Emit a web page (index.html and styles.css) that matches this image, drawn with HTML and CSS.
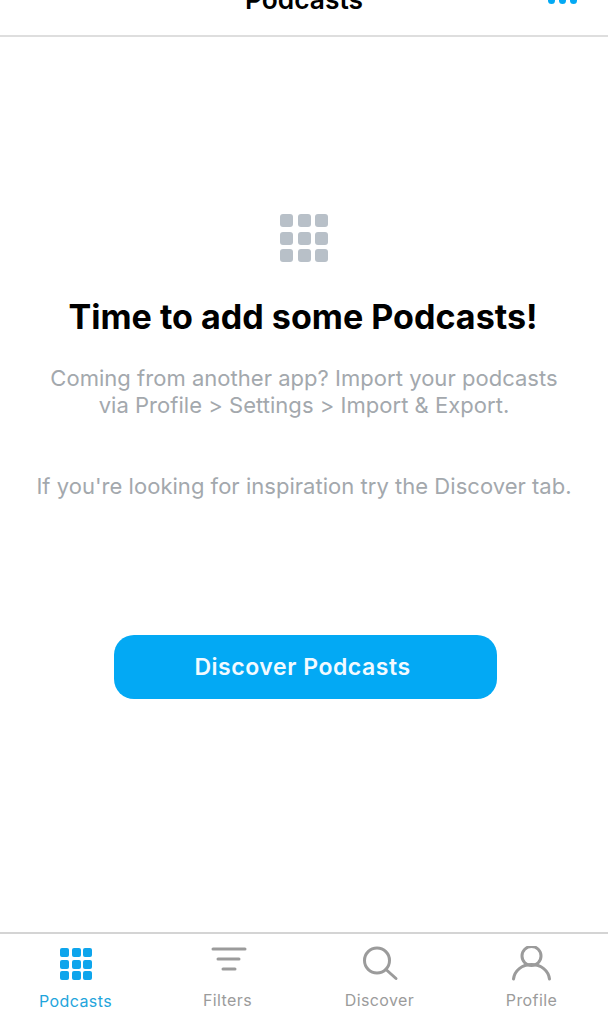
FILE: index.html
```html
<!DOCTYPE html>
<html lang="en">
<head>
  <meta charset="UTF-8">
  <meta name="viewport" content="width=device-width, initial-scale=1">
  <title>Podcasts</title>
  <link rel="stylesheet" href="styles.css">
</head>
<body>
  <div class="app">
    <div class="topbar">
      <h1 class="topbar-title">Podcasts</h1>
      <div class="more-dots"><span></span><span></span><span></span></div>
    </div>

    <div class="empty">
      <div class="grid-icon">
        <span></span><span></span><span></span>
        <span></span><span></span><span></span>
        <span></span><span></span><span></span>
      </div>
      <h2 class="empty-title">Time to add some Podcasts!</h2>
      <p class="empty-text">Coming from another app? Import your podcasts<br>via Profile &gt; Settings &gt; Import &amp; Export.</p>
      <p class="empty-text empty-hint">If you're looking for inspiration try the Discover tab.</p>
      <button class="discover-btn">Discover Podcasts</button>
    </div>

    <div class="tabbar">
      <a class="tab active">
        <div class="grid-icon small">
          <span></span><span></span><span></span>
          <span></span><span></span><span></span>
          <span></span><span></span><span></span>
        </div>
        <span class="tab-label">Podcasts</span>
      </a>
      <a class="tab">
        <svg class="tab-icon" viewBox="0 0 40 36" fill="none" stroke="#9b9b9b" stroke-width="3" stroke-linecap="round">
          <path d="M5 3H37M10 13H31M15 23H27"/>
        </svg>
        <span class="tab-label">Filters</span>
      </a>
      <a class="tab">
        <svg class="tab-icon" viewBox="0 0 40 36" fill="none" stroke="#9b9b9b" stroke-width="3" stroke-linecap="round">
          <circle cx="17" cy="14.500" r="12.500"/>
          <path d="M26 23.500L36 32.500"/>
        </svg>
        <span class="tab-label">Discover</span>
      </a>
      <a class="tab">
        <svg class="tab-icon" viewBox="0 0 40 36" fill="none" stroke="#9b9b9b" stroke-width="3" stroke-linecap="round">
          <circle cx="19.500" cy="10" r="9.500"/>
          <path d="M1.500 33C2.500 24.500 10 18.500 19.500 18.500S36.500 24.500 37.500 33"/>
        </svg>
        <span class="tab-label">Profile</span>
      </a>
    </div>
  </div>
</body>
</html>
```

FILE: styles.css
```css
* { margin: 0; padding: 0; box-sizing: border-box; }
body { font-family: 'Inter', 'Liberation Sans', sans-serif; background: #ffffff; color: #000000; }
.app { height: 1012px; display: flex; flex-direction: column; overflow: hidden; }

/* top bar, cut off by the top of the screen */
.topbar { height: 37px; flex: none; border-bottom: 2px solid #dedede; display: flex; justify-content: center; position: relative; overflow: hidden; }
.topbar-title { font-size: 26.3px; line-height: 30px; font-weight: 600; margin-top: -15px; }
.more-dots { position: absolute; top: -3px; right: 31px; display: flex; gap: 4px; }
.more-dots span { width: 7px; height: 7px; border-radius: 50%; background: #03a9f4; }

/* empty state */
.empty { flex: 1; display: flex; flex-direction: column; align-items: center; padding-top: 177px; text-align: center; }
.grid-icon { display: grid; grid-template-columns: repeat(3, 13px); grid-auto-rows: 13px; gap: 4.5px; }
.grid-icon span { background: #b8c0c8; border-radius: 3px; }
.empty-title { font-size: 34.1px; line-height: 40px; font-weight: 700; margin-top: 35px; margin-right: 2px; }
.empty-text { font-size: 22px; line-height: 27px; font-weight: 400; color: #a3a8ad; margin-top: 28px; letter-spacing: 0.03px; }
.empty-hint { margin-top: 54px; }
.discover-btn { width: 383px; height: 64px; margin-top: 135px; margin-left: 3px; padding-right: 6px; border: none; border-radius: 20px; background: #03a9f4; color: #f2faff; font-family: inherit; font-size: 23px; font-weight: 600; letter-spacing: 0.55px; }

/* bottom tabs */
.tabbar { height: 80px; flex: none; border-top: 2px solid #d4d4d4; display: grid; grid-template-columns: repeat(4, 1fr); }
.tab { display: flex; flex-direction: column; align-items: center; padding-top: 12px; color: #9b9b9b; }
.tab-icon { width: 40px; height: 36px; }
.tab-label { font-size: 16px; line-height: 20px; margin-top: 8px; margin-right: 1px; letter-spacing: 0.4px; }
.tab.active { color: #1fa5dc; }
.grid-icon.small { grid-template-columns: repeat(3, 9px); grid-auto-rows: 9px; gap: 2.5px; margin-top: 2px; margin-bottom: 3px; }
.grid-icon.small span { background: #0ea5ec; border-radius: 2px; }
```
